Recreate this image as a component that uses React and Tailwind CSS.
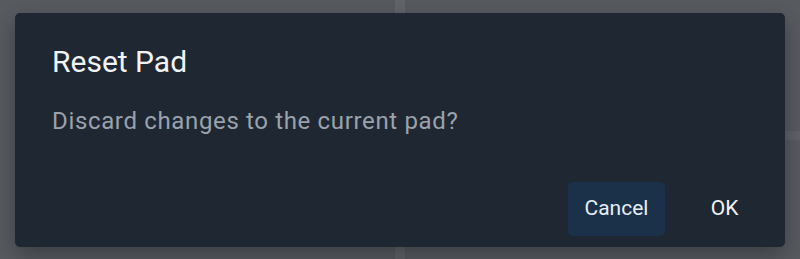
import React from 'react';

export default function App() {
  return (
    <div
      className="relative w-[800px] h-[259px] overflow-hidden bg-[#585c61]"
      style={{ fontFamily: 'Roboto, "Noto Sans", sans-serif' }}
    >
      {/* faint seams of the page behind the backdrop */}
      <div className="absolute left-[395px] top-0 w-[10px] h-full bg-[#62666b]" />
      <div className="absolute left-[400px] top-[131px] w-[400px] h-[9px] bg-[#5f6368]" />

      <div className="relative pt-[13px] pl-[15px]">
        <div className="w-[770px] h-[234px] rounded-[5px] bg-[#1f2733] shadow-[0_8px_24px_rgba(0,0,0,0.35)] flex flex-col">
          <h2 className="pt-[31px] px-[37px] text-[30px] leading-[36px] font-normal text-[#f1f3f5]">
            Reset Pad
          </h2>
          <p className="mt-[23px] px-[37px] text-[24px] leading-[36px] tracking-[0.65px] text-[#9ba2ac]">
            Discard changes to the current pad?
          </p>
          <div className="mt-auto flex justify-end gap-[11px] pr-[12px] pb-[11px]">
            <button className="w-[97px] h-[54px] rounded-[5px] bg-[#1b3149] text-[21px] text-[#e6eef8]">
              Cancel
            </button>
            <button className="w-[97px] h-[54px] rounded-[5px] text-[21px] text-[#f1f3f5]">
              OK
            </button>
          </div>
        </div>
      </div>
    </div>
  );
}
